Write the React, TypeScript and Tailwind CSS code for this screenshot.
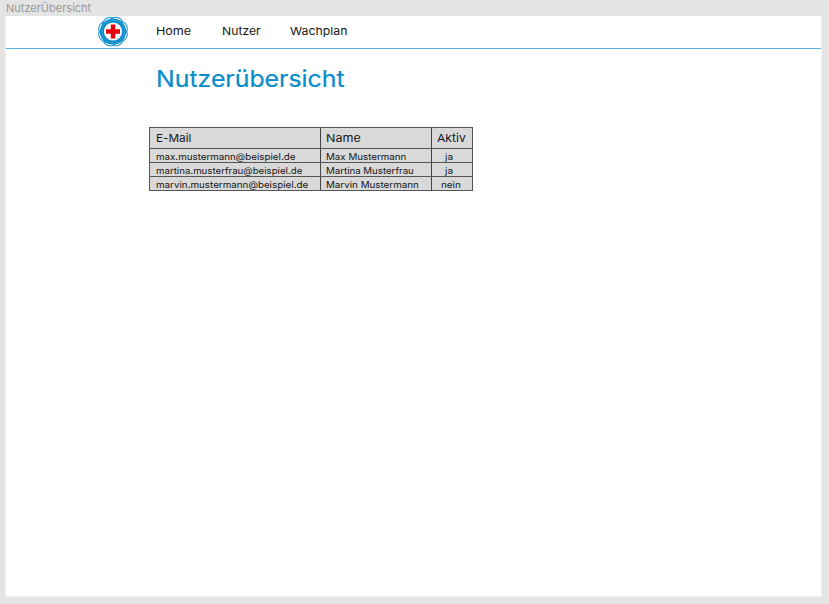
import React from "react";

function Label({ children, className = "" }: { children: React.ReactNode; className?: string }) {
  return <span className={`block w-max origin-left whitespace-nowrap ${className}`}>{children}</span>;
}

function Logo() {
  const lobes = Array.from({ length: 8 }, (_, i) => i * 45 + 22.5);
  return (
    <svg className="-mt-[2px] ml-[92px] h-[31px] w-[30px] shrink-0" viewBox="-15 -15.5 30 31" aria-label="Logo">
      <g fill="#fff" stroke="#1b95d0" strokeWidth="1.1">
        {lobes.map((a) => (
          <circle key={a} r="7.6" cx="7.2" transform={`rotate(${a})`} />
        ))}
      </g>
      <circle r="11.1" fill="#fff" stroke="#0b8ccb" strokeWidth="4" />
      <circle r="11.2" fill="none" stroke="#55b0dc" strokeWidth="1" strokeDasharray="1 0.8" />
      <path d="M-2.2-7h4.5v4.7H7v4.6H2.3V7h-4.5V2.3H-7v-4.6h4.8z" fill="#e8000b" />
    </svg>
  );
}

const rows = [
  { mail: "max.mustermann@beispiel.de", name: "Max Mustermann", active: "ja", pad: "pl-[13px]", fit: "scale-x-[1.085]" },
  { mail: "martina.musterfrau@beispiel.de", name: "Martina Musterfrau", active: "ja", pad: "pl-[13px]", fit: "scale-x-[1.075]" },
  { mail: "marvin.mustermann@beispiel.de", name: "Marvin Mustermann", active: "nein", pad: "pl-[9px]", fit: "scale-x-[1.09]" },
];

const columns = "grid grid-cols-[171px_111px_40px] divide-x divide-[#444] overflow-hidden border-b border-[#555]";

export default function App() {
  return (
    <div className="flex h-[604px] w-[829px] flex-col overflow-hidden bg-[#e4e4e4] font-['Inter',sans-serif] text-[#161616]">
      <div className="h-[16px] shrink-0 pl-[6px] text-[11px] leading-[17px] text-[#999]">
        <Label>NutzerÜbersicht</Label>
      </div>
      <main className="ml-[5px] h-[581px] w-[817px] border border-t-0 border-[#efefef] bg-white">
        <header className="flex h-[33px] items-center border-b border-[#55b5e0]">
          <Logo />
          <nav className="-mt-[2px] flex text-[11px] leading-[14px]">
            <div className="ml-[28px] w-[66px]"><Label className="scale-x-[1.14]">Home</Label></div>
            <div className="w-[68px]"><Label className="scale-x-[1.11]">Nutzer</Label></div>
            <div><Label className="scale-x-[1.12]">Wachplan</Label></div>
          </nav>
        </header>
        <h1 className="ml-[150px] mt-[15px] text-[23px] font-normal leading-[30px] text-[#078ccb]">
          <Label className="scale-x-[1.08] [-webkit-text-stroke:0.2px_#078ccb]">Nutzerübersicht</Label>
        </h1>
        <section className="ml-[143px] mt-[33px] w-[324px] border border-b-0 border-[#555] bg-[#d9d9d9]">
          <div className={`${columns} h-[21px] text-[11px] leading-[21px]`}>
            <div className="pl-[6px]"><Label className="scale-x-[1.07]">E-Mail</Label></div>
            <div className="pl-[5px]"><Label className="scale-x-[1.14]">Name</Label></div>
            <div className="pl-[5px]"><Label className="scale-x-[1.1]">Aktiv</Label></div>
          </div>
          {rows.map((row) => (
            <div key={row.mail} className={`${columns} h-[14px] text-[9px] leading-[15px]`}>
              <div className="pl-[6px]"><Label className={row.fit}>{row.mail}</Label></div>
              <div className="pl-[5px]"><Label className={row.fit}>{row.name}</Label></div>
              <div className={row.pad}><Label className="scale-x-[1.1]">{row.active}</Label></div>
            </div>
          ))}
        </section>
      </main>
    </div>
  );
}
